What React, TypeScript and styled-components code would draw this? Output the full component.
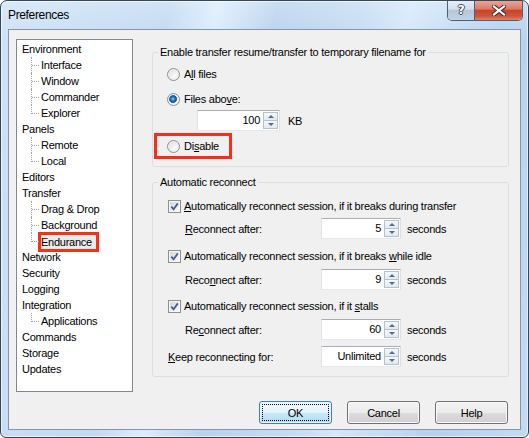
import React from 'react';
import styled, { createGlobalStyle, css } from 'styled-components';

const GlobalStyle = createGlobalStyle`
  * { box-sizing: border-box; }
  html, body { margin: 0; padding: 0; background: #ffffff; }
  body {
    font-family: "Liberation Sans", Arial, sans-serif;
    font-size: 11px;
    letter-spacing: -0.25px;
    color: #000;
  }
`;

const Frame = styled.div`
  width: 529px;
  height: 438px;
  display: flex;
  flex-direction: column;
  border: 1px solid #34465c;
  border-radius: 7px 7px 6px 6px;
  overflow: hidden;
  background:
    linear-gradient(180deg, rgba(255, 255, 255, 0.25), rgba(255, 255, 255, 0) 40px),
    linear-gradient(100deg, #cfe2f6 0%, #c2d9f1 28%, #dcecfb 36%, #b8d2ee 46%, #c4dbf2 60%, #d5e7f9 68%, #b6d1ee 84%, #c3daf2 100%);
  box-shadow: inset 0 0 0 1px rgba(255, 255, 255, 0.6);
`;

const TitleBar = styled.div`
  height: 28px;
  flex: none;
  display: flex;
  justify-content: space-between;
  align-items: flex-start;
  padding: 0 5px 0 7px;
`;

const Title = styled.div`
  font-size: 12px;
  letter-spacing: -0.35px;
  line-height: 28px;
`;

const CaptionButtons = styled.div`
  display: flex;
  margin-top: -1px;
  height: 21px;
  border: 1px solid #4f5f73;
  border-top: none;
  border-radius: 0 0 5px 5px;
  overflow: hidden;
`;

const CaptionButton = styled.div<{ $close?: boolean }>`
  display: flex;
  align-items: center;
  justify-content: center;
  width: ${p => (p.$close ? 48 : 26)}px;
  ${p =>
    p.$close
      ? css`
          border-left: 1px solid #4f5f73;
          background: linear-gradient(180deg, #e9ab9d 0%, #dc7b68 45%, #c8442d 52%, #cf5339 80%, #e08467 100%);
        `
      : css`
          background: linear-gradient(180deg, #e8eff8 0%, #d2dfed 45%, #b5c6d9 52%, #c2d3e5 100%);
        `}
`;

const HelpGlyph = styled.span`
  font-family: "DejaVu Sans", sans-serif;
  font-weight: bold;
  font-size: 12px;
  line-height: 1;
  color: #fff;
  text-shadow: 1px 0 #3d4b5e, -1px 0 #3d4b5e, 0 1px #3d4b5e, 0 -1px #3d4b5e;
`;

const Client = styled.div`
  flex: 1;
  margin: 0 7px 7px 7px;
  border: 1px solid #8396ad;
  background: #f0f0f0;
  padding: 9px 11px 0 7px;
  display: flex;
  flex-direction: column;
`;

const Body = styled.div`
  display: flex;
  height: 353px;
  flex: none;
`;

const Tree = styled.div`
  width: 117px;
  height: 353px;
  flex: none;
  background: #fff;
  border: 1px solid #828790;
  padding: 1px 0 0 5px;
`;

const TreeRow = styled.div<{ $child?: boolean; $last?: boolean }>`
  position: relative;
  height: 16px;
  line-height: 16px;
  white-space: nowrap;
  padding-left: ${p => (p.$child ? 19 : 0)}px;
  ${p =>
    p.$child &&
    css`
      &::before {
        content: '';
        position: absolute;
        left: 9px;
        top: 0;
        height: ${p.$last ? 9 : 16}px;
        border-left: 1px dotted #a0a0a0;
      }
      &::after {
        content: '';
        position: absolute;
        left: 10px;
        top: 8px;
        width: 7px;
        border-top: 1px dotted #a0a0a0;
      }
    `}
`;

const SelectedLabel = styled.span`
  display: inline-block;
  height: 20px;
  line-height: 14px;
  margin: -1px 0 0 -3px;
  padding: 0 4px 0 0;
  border: 3px solid #f5301a;
  background: #ebebeb;
  vertical-align: top;
`;

const Side = styled.div`
  flex: 1;
  margin-left: 19px;
  padding-top: 6px;
  display: flex;
  flex-direction: column;
`;

const Group = styled.fieldset<{ $mt?: number }>`
  margin: ${p => p.$mt ?? 0}px 0 0 0;
  padding: 0;
  min-width: 0;
  border: 1px solid #d5dfe5;
  border-radius: 3px;
`;

const Legend = styled.legend`
  margin-left: 5px;
  padding: 0 2px;
  line-height: 14px;
  height: 14px;
`;

const GroupBody = styled.div<{ $pad: string }>`
  display: flex;
  flex-direction: column;
  align-items: flex-start;
  padding: ${p => p.$pad};
`;

const OptionRow = styled.div<{ $mt?: number }>`
  display: flex;
  align-items: center;
  height: 16px;
  line-height: 16px;
  margin-top: ${p => p.$mt ?? 0}px;
  white-space: nowrap;
`;

const Annotation = styled.div<{ $mt?: number }>`
  width: 78px;
  margin: ${p => p.$mt ?? 0}px 0 0 -13px;
  padding: 2px 0 2px 10px;
  border: 3px solid #f5301a;
`;

const RadioDot = styled.span<{ $checked?: boolean }>`
  width: 13px;
  height: 13px;
  flex: none;
  margin-right: 4px;
  border-radius: 50%;
  border: 1px solid #8b8d8f;
  background: ${p =>
    p.$checked
      ? 'radial-gradient(circle at 45% 45%, #8ddbfb 0, #2f8ccd 1.6px, #114c86 3.2px, #3a6f9c 3.8px, #eeeeee 4.3px, #f8f8f8 100%)'
      : 'radial-gradient(circle at 62% 62%, #fbfbfb 0, #e6e6e6 60%, #cfcfcf 100%)'};
  box-shadow: inset 0 0 0 1px #f3f3f3;
`;

const CheckBox = styled.span`
  width: 13px;
  height: 13px;
  flex: none;
  margin-right: 3px;
  border: 1px solid #8e8f8f;
  background: linear-gradient(135deg, #d0d3d8 0%, #f4f4f4 80%);
  box-shadow: inset 0 0 0 1px #f7f7f7;
  display: flex;
  align-items: center;
  justify-content: center;
`;

const FieldRow = styled.div<{ $mt?: number; $indent?: number }>`
  display: flex;
  align-items: center;
  height: 21px;
  margin-top: ${p => p.$mt ?? 0}px;
  padding-left: ${p => p.$indent ?? 0}px;
  white-space: nowrap;
`;

const FieldLabel = styled.span<{ $width: number }>`
  width: ${p => p.$width}px;
  flex: none;
`;

const SpinBox = styled.div<{ $width: number }>`
  width: ${p => p.$width}px;
  height: 21px;
  flex: none;
  display: flex;
  background: #fff;
  border: 1px solid;
  border-color: #abadb3 #dbdfe6 #e3e9ef #e2e3ea;
  padding: 1px;
`;

const SpinValue = styled.span`
  flex: 1;
  text-align: right;
  padding-right: 3px;
  line-height: 17px;
`;

const SpinButtons = styled.div`
  width: 15px;
  display: flex;
  flex-direction: column;
`;

const SpinArrow = styled.span<{ $down?: boolean }>`
  flex: 1;
  display: flex;
  align-items: center;
  justify-content: center;
  border: 1px solid #b6c1ce;
  background: linear-gradient(180deg, #f6f8fa 0%, #e3e9ef 100%);
  ${p => p.$down && 'border-top: none;'}
  &::before {
    content: '';
    border-left: 3px solid transparent;
    border-right: 3px solid transparent;
    ${p => (p.$down ? 'border-top: 3px solid #506b8f;' : 'border-bottom: 3px solid #506b8f;')}
  }
`;

const Unit = styled.span<{ $gap: number }>`
  margin-left: ${p => p.$gap}px;
`;

const ButtonBar = styled.div`
  display: flex;
  justify-content: flex-end;
  gap: 15px;
  margin-top: 9px;
  padding-right: 1px;
`;

const Button = styled.button<{ $default?: boolean }>`
  position: relative;
  width: 73px;
  height: 23px;
  padding: 0;
  font: inherit;
  letter-spacing: inherit;
  color: #000;
  border: 1px solid #707070;
  border-radius: 3px;
  background: linear-gradient(180deg, #f2f2f2 0%, #ebebeb 50%, #dddddd 51%, #cfcfcf 100%);
  box-shadow: inset 0 0 0 1px #fbfbfb;
  ${p =>
    p.$default &&
    css`
      border-color: #3c7fb1;
      background: linear-gradient(180deg, #f0f9fe 0%, #e2f3fc 50%, #c8e9fb 51%, #b2dcf4 100%);
      box-shadow: inset 0 0 0 1px #e6f4fc;
      &::after {
        content: '';
        position: absolute;
        inset: 2px;
        border: 1px dotted #000;
        border-radius: 1px;
      }
    `}
`;

const Spin = ({ value, width }: { value: string; width: number }) => (
  <SpinBox $width={width}>
    <SpinValue>{value}</SpinValue>
    <SpinButtons>
      <SpinArrow />
      <SpinArrow $down />
    </SpinButtons>
  </SpinBox>
);

const Check = () => (
  <CheckBox>
    <svg width="9" height="9" viewBox="0 0 9 9">
      <path d="M1.3 4.6 L3.6 7.2 L7.8 1.4" fill="none" stroke="#4b5f91" strokeWidth="1.8" />
    </svg>
  </CheckBox>
);

const treeItems: { label: string; child?: boolean; last?: boolean; selected?: boolean }[] = [
  { label: 'Environment' },
  { label: 'Interface', child: true },
  { label: 'Window', child: true },
  { label: 'Commander', child: true },
  { label: 'Explorer', child: true, last: true },
  { label: 'Panels' },
  { label: 'Remote', child: true },
  { label: 'Local', child: true, last: true },
  { label: 'Editors' },
  { label: 'Transfer' },
  { label: 'Drag & Drop', child: true },
  { label: 'Background', child: true },
  { label: 'Endurance', child: true, last: true, selected: true },
  { label: 'Network' },
  { label: 'Security' },
  { label: 'Logging' },
  { label: 'Integration' },
  { label: 'Applications', child: true, last: true },
  { label: 'Commands' },
  { label: 'Storage' },
  { label: 'Updates' },
];

export default function App() {
  return (
    <>
      <GlobalStyle />
      <Frame>
        <TitleBar>
          <Title>Preferences</Title>
          <CaptionButtons>
            <CaptionButton>
              <HelpGlyph>?</HelpGlyph>
            </CaptionButton>
            <CaptionButton $close>
              <svg width="14" height="11" viewBox="0 0 14 11">
                <path d="M2 1.5 L12 9.5 M12 1.5 L2 9.5" stroke="#4a2a26" strokeWidth="4.2" strokeLinecap="square" />
                <path d="M2 1.5 L12 9.5 M12 1.5 L2 9.5" stroke="#ffffff" strokeWidth="2.2" strokeLinecap="square" />
              </svg>
            </CaptionButton>
          </CaptionButtons>
        </TitleBar>
        <Client>
          <Body>
            <Tree>
              {treeItems.map(item => (
                <TreeRow key={item.label} $child={item.child} $last={item.last}>
                  {item.selected ? <SelectedLabel>{item.label}</SelectedLabel> : item.label}
                </TreeRow>
              ))}
            </Tree>
            <Side>
              <Group>
                <Legend>Enable transfer resume/transfer to temporary filename for</Legend>
                <GroupBody $pad="7px 0 7px 14px">
                  <OptionRow>
                    <RadioDot />
                    <span>A<u>l</u>l files</span>
                  </OptionRow>
                  <OptionRow $mt={9}>
                    <RadioDot $checked />
                    <span>Files abo<u>v</u>e:</span>
                  </OptionRow>
                  <FieldRow $mt={3} $indent={30}>
                    <Spin value="100" width={83} />
                    <Unit $gap={8}>KB</Unit>
                  </FieldRow>
                  <Annotation $mt={2}>
                    <OptionRow>
                      <RadioDot />
                      <span>Di<u>s</u>able</span>
                    </OptionRow>
                  </Annotation>
                </GroupBody>
              </Group>
              <Group $mt={8}>
                <Legend>Automatic reconnect</Legend>
                <GroupBody $pad="9px 0 9px 15px">
                  <OptionRow>
                    <Check />
                    <span><u>A</u>utomatically reconnect session, if it breaks during transfer</span>
                  </OptionRow>
                  <FieldRow $mt={4} $indent={17}>
                    <FieldLabel $width={136}><u>R</u>econnect after:</FieldLabel>
                    <Spin value="5" width={80} />
                    <Unit $gap={6}>seconds</Unit>
                  </FieldRow>
                  <OptionRow $mt={9}>
                    <Check />
                    <span>Automatically reconnect session, if it breaks <u>w</u>hile idle</span>
                  </OptionRow>
                  <FieldRow $mt={5} $indent={17}>
                    <FieldLabel $width={136}>Reco<u>n</u>nect after:</FieldLabel>
                    <Spin value="9" width={80} />
                    <Unit $gap={6}>seconds</Unit>
                  </FieldRow>
                  <OptionRow $mt={8}>
                    <Check />
                    <span>Automatically reconnect session, if it <u>s</u>talls</span>
                  </OptionRow>
                  <FieldRow $mt={5} $indent={17}>
                    <FieldLabel $width={136}>Re<u>c</u>onnect after:</FieldLabel>
                    <Spin value="60" width={80} />
                    <Unit $gap={6}>seconds</Unit>
                  </FieldRow>
                  <FieldRow $mt={6}>
                    <FieldLabel $width={153}><u>K</u>eep reconnecting for:</FieldLabel>
                    <Spin value="Unlimited" width={80} />
                    <Unit $gap={6}>seconds</Unit>
                  </FieldRow>
                </GroupBody>
              </Group>
            </Side>
          </Body>
          <ButtonBar>
            <Button $default>OK</Button>
            <Button>Cancel</Button>
            <Button>Help</Button>
          </ButtonBar>
        </Client>
      </Frame>
    </>
  );
}
